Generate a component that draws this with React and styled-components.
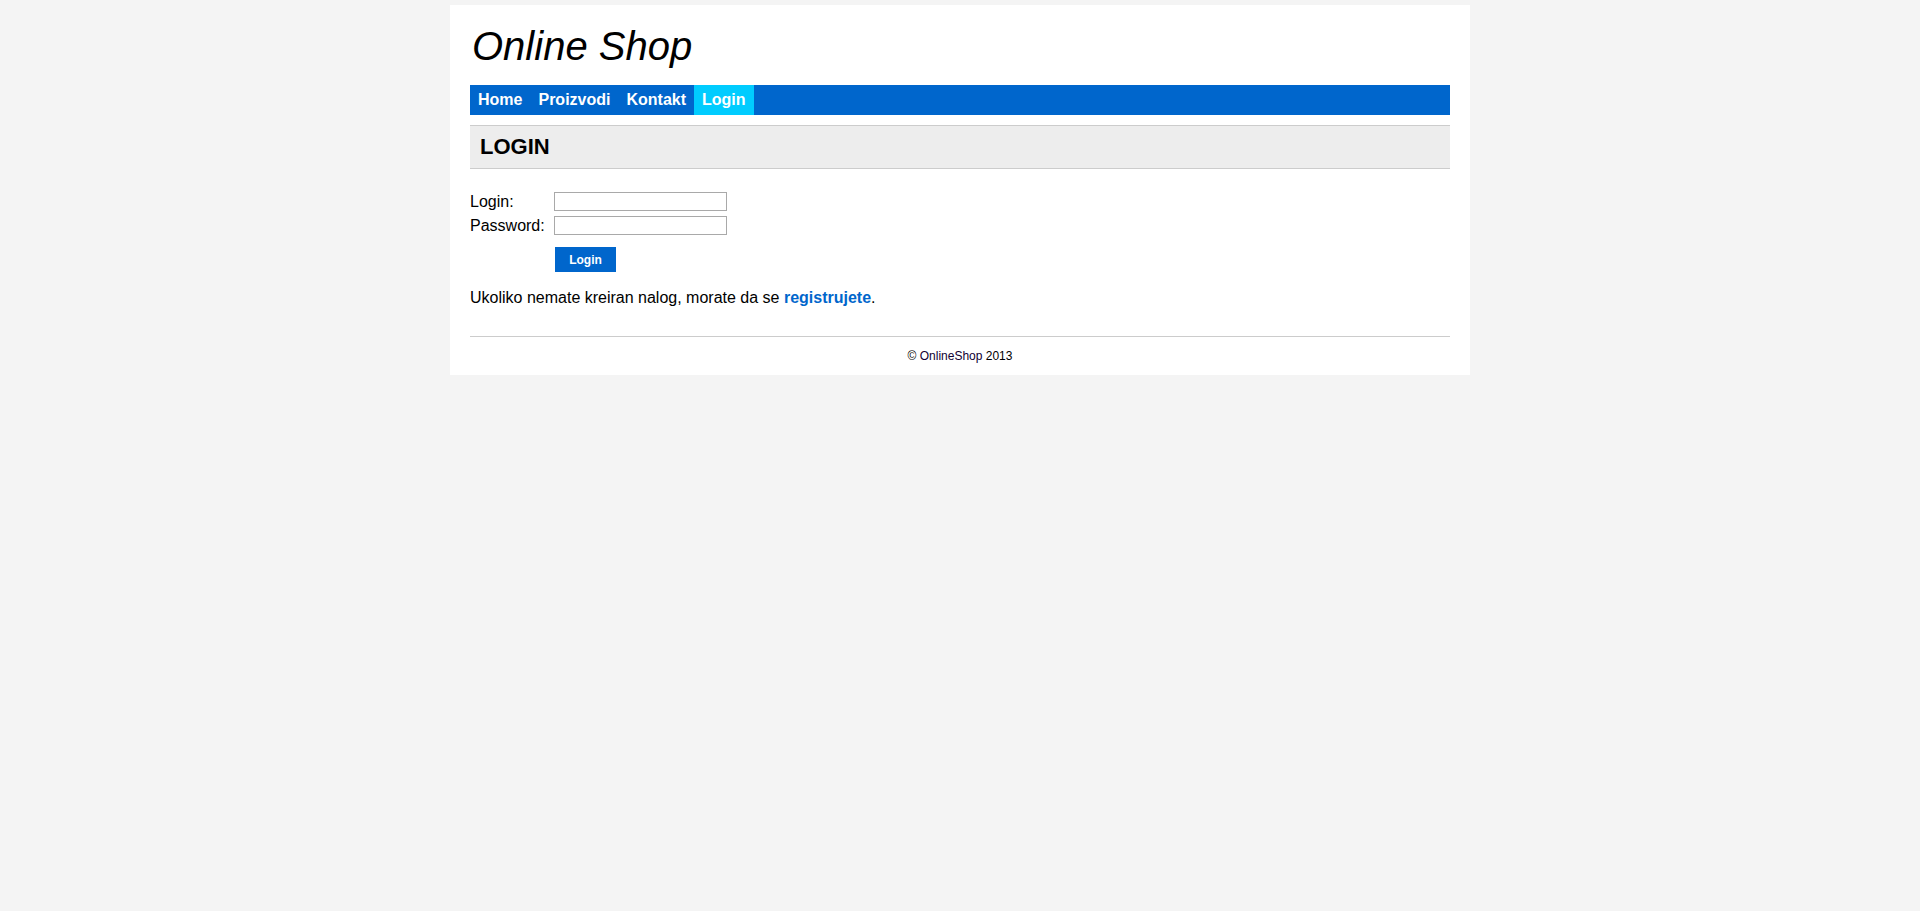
import React from "react";
import styled, { createGlobalStyle } from "styled-components";

const GlobalStyle = createGlobalStyle`
  html, body {
    margin: 0;
    padding: 0;
    background: #f4f4f4;
    font-family: "Liberation Sans", Arial, sans-serif;
    color: #000;
  }
`;

const Page = styled.div`
  width: 980px;
  margin: 5px auto 0;
  padding: 0 20px;
  background: #fff;
`;

const Header = styled.header`
  padding: 17px 0 15px;
`;

const Title = styled.h1`
  margin: 0;
  font-size: 40px;
  line-height: 48px;
  font-style: italic;
  font-weight: normal;
  padding-left: 2px;
`;

const Nav = styled.nav`
  display: flex;
  height: 30px;
  background: #0066cc;
`;

const NavItem = styled.a`
  display: block;
  padding: 0 8px;
  line-height: 30px;
  font-size: 16px;
  font-weight: bold;
  color: #fff;
  text-decoration: none;
  background: ${(p) => (p.$active ? "#00ccff" : "transparent")};
`;

const Heading = styled.h2`
  margin: 10px 0 0;
  height: 42px;
  line-height: 42px;
  padding: 0 10px;
  background: #ededed;
  border-top: 1px solid #cccccc;
  border-bottom: 1px solid #cccccc;
  font-size: 22px;
  font-weight: bold;
`;

const Form = styled.form`
  display: grid;
  grid-template-columns: 84px 173px;
  row-gap: 5px;
  margin-top: 23px;
  align-items: center;
`;

const Label = styled.label`
  font-size: 16px;
  line-height: 19px;
`;

const Input = styled.input`
  box-sizing: border-box;
  width: 173px;
  height: 19px;
  margin: 0;
  padding: 0 2px;
  border: 1px solid #a9a9a9;
  font-size: 13px;
  font-family: "Liberation Sans", Arial, sans-serif;
`;

const Button = styled.button`
  grid-column: 2;
  justify-self: start;
  margin: 7px 0 0 1px;
  width: 61px;
  height: 25px;
  padding: 0;
  border: none;
  background: #0066cc;
  color: #fff;
  font-family: "Liberation Sans", Arial, sans-serif;
  font-size: 12px;
  font-weight: bold;
  cursor: pointer;
`;

const Text = styled.p`
  margin: 17px 0 0;
  font-size: 16px;
  line-height: 18px;
`;

const Link = styled.a`
  color: #0066cc;
  font-weight: bold;
  text-decoration: none;
`;

const Footer = styled.footer`
  margin-top: 29px;
  border-top: 1px solid #cccccc;
  padding: 12px 0;
  text-align: center;
  font-size: 12px;
  line-height: 14px;
  color: #000;
`;

const FooterLink = styled.span`
  color: #110033;
`;

export default function App() {
  return (
    <>
      <GlobalStyle />
      <Page>
        <Header>
          <Title>Online Shop</Title>
        </Header>
        <Nav>
          <NavItem href="#">Home</NavItem>
          <NavItem href="#">Proizvodi</NavItem>
          <NavItem href="#">Kontakt</NavItem>
          <NavItem href="#" $active>Login</NavItem>
        </Nav>
        <Heading>LOGIN</Heading>
        <Form onSubmit={(e) => e.preventDefault()}>
          <Label htmlFor="login">Login:</Label>
          <Input id="login" type="text" />
          <Label htmlFor="password">Password:</Label>
          <Input id="password" type="password" />
          <Button type="submit">Login</Button>
        </Form>
        <Text>
          Ukoliko nemate kreiran nalog, morate da se <Link href="#">registrujete</Link>.
        </Text>
        <Footer>
          © <FooterLink>OnlineShop</FooterLink> 2013
        </Footer>
      </Page>
    </>
  );
}
